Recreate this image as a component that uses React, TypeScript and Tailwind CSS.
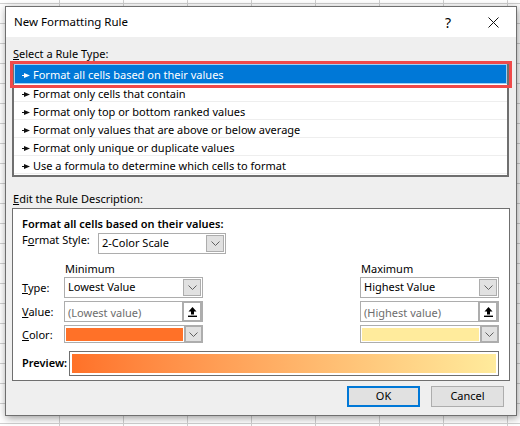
const rules = [
  "Format all cells based on their values",
  "Format only cells that contain",
  "Format only top or bottom ranked values",
  "Format only values that are above or below average",
  "Format only unique or duplicate values",
  "Use a formula to determine which cells to format",
];

const Chevron = () => (
  <svg viewBox="0 0 9 5" className="w-[9px] h-[5px]" fill="none" stroke="#606060">
    <path d="M0.5 0.5 L4.5 4.5 L8.5 0.5" />
  </svg>
);

const ArrowBtn = () => (
  <div className="w-[18px] h-[17px] m-[1px] bg-[#e1e1e1] border border-[#adadad] flex items-center justify-center shrink-0">
    <Chevron />
  </div>
);

const Pick = () => (
  <div className="w-[21px] bg-white border-[2px] border-[#adadad] border-r-[3px] flex items-center justify-center shrink-0 -my-[1px] -mr-[1px]">
    <svg viewBox="0 0 9 10" className="w-[9px] h-[10px]" fill="#000">
      <path d="M4.5 0 L8.5 4.5 H6 V7.5 H3 V4.5 H0.5 Z" />
      <rect x="0" y="8.6" width="9" height="1.4" />
    </svg>
  </div>
);

const Select = ({ label, w }: { label: string; w: string }) => (
  <div className={`${w} h-[21px] bg-white border border-[#adadad] flex items-center`}>
    <span className="flex-1 pl-[3px] text-black">{label}</span>
    <ArrowBtn />
  </div>
);

const ValueInput = ({ label }: { label: string }) => (
  <div className="w-[139px] h-[21px] bg-white border border-[#adadad] flex items-stretch">
    <span className="flex-1 pl-[3px] text-[#6d6d6d] leading-[21px]">{label}</span>
    <Pick />
  </div>
);

const ColorPick = ({ color }: { color: string }) => (
  <div className="w-[139px] h-[18px] bg-white border border-[#adadad] flex items-stretch">
    <div className="flex-1 bg-white p-[1px] pt-[2px]">
      <div className={`h-full ${color}`} />
    </div>
    <div className="w-[19px] bg-[#e1e1e1] border-[2px] border-[#adadad] -my-[1px] -mr-[1px] flex items-center justify-center">
      <Chevron />
    </div>
  </div>
);

export default function App() {
  return (
    <div
      className="relative w-[520px] h-[426px] overflow-hidden bg-white text-[11px] text-black bg-[linear-gradient(to_right,#d0d0d0_1px,transparent_1px),linear-gradient(to_bottom,#d0d0d0_1px,transparent_1px)] bg-[size:64px_20px] bg-[position:59px_3px]"
      style={{ fontFamily: '"Noto Sans", "Open Sans", sans-serif' }}
    >
      <div className="absolute left-[5px] top-[6px] w-[512px] h-[410px] border border-[#6f6f6f] bg-[#efefef] shadow-[1px_2px_8px_rgba(0,0,0,0.4)] flex flex-col">
        <div className="h-[30px] bg-white flex items-center pl-[8px] shrink-0">
          <span className="flex-1 text-[11.5px]">New Formatting Rule</span>
          <span className="w-[20px] text-center text-[14px] mr-[30px]">?</span>
          <svg viewBox="0 0 11 11" className="w-[11px] h-[11px] mr-[17px]" stroke="#111" fill="none">
            <path d="M0.5 0.5 L10.5 10.5 M10.5 0.5 L0.5 10.5" />
          </svg>
        </div>

        <div className="px-[6px] flex-1 flex flex-col">
          <div className="h-[17px] mt-[8px] leading-[17px] pl-[1px]">
            <span className="underline">S</span>elect a Rule Type:
          </div>
          <div className="relative w-[497px] mt-[-1px] h-[116px] border-[2px] border-[#6f6f6f] border-t-0 bg-white flex flex-col">
            {rules.map((r, i) => (
              <div
                key={r}
                className={
                  i === 0
                    ? "h-[23px] pt-[3px] flex items-center"
                    : "h-[18px] flex items-center border-b border-[#eeeeee] last:border-b-0"
                }
              >
                <div
                  className={
                    i === 0
                      ? "w-full h-[20px] bg-[#0078d7] text-white outline outline-1 -outline-offset-1 outline-[#9cd0f5] flex items-center pl-[8px] pt-[2px]"
                      : "flex items-center pl-[8px] pt-[3px]"
                  }
                >
                  <svg viewBox="0 0 8 5" className="w-[8px] h-[5px] mr-[3px]" fill={i === 0 ? "#fff" : "#111"}>
                    <path d="M0 2 H2 V0 L8 2.5 L2 5 V3 H0 Z" />
                  </svg>
                  <span>{r}</span>
                </div>
              </div>
            ))}
            <div className="absolute left-[-4px] right-[-5px] top-0 h-[27px] border-[3px] border-[#f04a4a]" />
          </div>

          <div className="h-[17px] mt-[13px] leading-[17px] pl-[1px]">
            <span className="underline">E</span>dit the Rule Description:
          </div>
          <div className="w-[498px] h-[173px] mt-[1px] border border-[#6f6f6f] bg-white pl-[9px] pr-[9px] pt-[6px]">
            <div className="font-semibold h-[17px] leading-[17px]">Format all cells based on their values:</div>
            <div className="flex items-start mt-[1px] h-[21px]">
              <span className="w-[76px] leading-[14px]">
                F<span className="underline">o</span>rmat Style:
              </span>
              <Select label="2-Color Scale" w="w-[128px]" />
            </div>
            <div className="flex justify-between mt-[6px]">
              <div className="h-[17px] leading-[17px] pl-[43px]">Minimum</div>
              <div className="w-[139px] mr-[1px] h-[17px] leading-[17px] pl-[1px]">Maximum</div>
            </div>
            <div className="flex justify-between">
              <div className="flex flex-col gap-[3px]">
                <div className="flex items-center">
                  <span className="w-[42px] pt-[2px]"><span className="underline">T</span>ype:</span>
                  <Select label="Lowest Value" w="w-[139px]" />
                </div>
                <div className="flex items-center">
                  <span className="w-[42px] pt-[2px]"><span className="underline">V</span>alue:</span>
                  <ValueInput label="(Lowest value)" />
                </div>
                <div className="flex items-center">
                  <span className="w-[42px] pt-[2px]"><span className="underline">C</span>olor:</span>
                  <ColorPick color="bg-[#ff7128]" />
                </div>
              </div>
              <div className="flex flex-col gap-[3px] mr-[1px]">
                <Select label="Highest Value" w="w-[139px]" />
                <ValueInput label="(Highest value)" />
                <ColorPick color="bg-[#ffeb9c]" />
              </div>
            </div>
            <div className="flex items-center mt-[7px] h-[25px]">
              <span className="w-[47px] font-semibold">Preview:</span>
              <div className="w-[430px] h-[25px] border border-[#6f6f6f] bg-white p-[2px]">
                <div className="h-full bg-gradient-to-r from-[#ff7128] to-[#ffeb9c]" />
              </div>
            </div>
          </div>

          <div className="flex justify-end gap-[11px] mt-[5px] pr-[6px]">
            <button className="w-[73px] h-[21px] bg-[#e1e1e1] border-[2px] border-[#0078d7] text-black">OK</button>
            <button className="w-[73px] h-[21px] bg-[#e1e1e1] border border-[#adadad] text-black">Cancel</button>
          </div>
        </div>
      </div>
    </div>
  );
}
